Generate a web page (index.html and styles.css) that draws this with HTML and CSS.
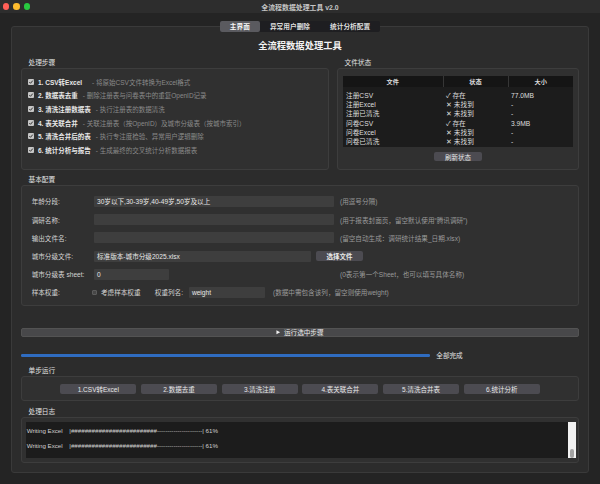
FILE: index.html
```html
<!DOCTYPE html>
<html lang="zh-CN">

<head>
    <meta charset="UTF-8">
    <title>全流程数据处理工具 v2.0</title>
    <link rel="stylesheet" href="styles.css">
</head>

<body>
    <div class="titlebar">
        <div class="lights">
            <span class="light red"></span>
            <span class="light yellow"></span>
            <span class="light green"></span>
        </div>
        <div class="title">全流程数据处理工具 v2.0</div>
        <div></div>
    </div>

    <div class="window-body">
        <div class="tabs">
            <div class="tabbar">
                <div class="tab active">主界面</div>
                <div class="tab">异常用户删除</div>
                <div class="tab">统计分析配置</div>
            </div>
        </div>

        <div class="panel">
            <div class="heading">全流程数据处理工具</div>

            <div class="top-row">
                <div class="steps-col">
                    <div class="section-label">处理步骤</div>
                    <div class="group steps">
                        <div class="step">
                            <svg class="check" viewBox="0 0 6 6"><rect width="6" height="6" rx="1" fill="#c6c6c6"/><path d="M1.3 3.1 L2.5 4.3 L4.8 1.6" fill="none" stroke="#262626" stroke-width="0.9"/></svg>
                            <span class="step-name">1. CSV转Excel</span>
                            <span class="step-desc far">- 将原始CSV文件转换为Excel格式</span>
                        </div>
                        <div class="step">
                            <svg class="check" viewBox="0 0 6 6"><rect width="6" height="6" rx="1" fill="#c6c6c6"/><path d="M1.3 3.1 L2.5 4.3 L4.8 1.6" fill="none" stroke="#262626" stroke-width="0.9"/></svg>
                            <span class="step-name">2. 数据表去重</span>
                            <span class="step-desc">- 删除注册表与问卷表中的重复OpenID记录</span>
                        </div>
                        <div class="step">
                            <svg class="check" viewBox="0 0 6 6"><rect width="6" height="6" rx="1" fill="#c6c6c6"/><path d="M1.3 3.1 L2.5 4.3 L4.8 1.6" fill="none" stroke="#262626" stroke-width="0.9"/></svg>
                            <span class="step-name">3. 清洗注册数据表</span>
                            <span class="step-desc">- 执行注册表的数据清洗</span>
                        </div>
                        <div class="step">
                            <svg class="check" viewBox="0 0 6 6"><rect width="6" height="6" rx="1" fill="#c6c6c6"/><path d="M1.3 3.1 L2.5 4.3 L4.8 1.6" fill="none" stroke="#262626" stroke-width="0.9"/></svg>
                            <span class="step-name">4. 表关联合并</span>
                            <span class="step-desc">- 关联注册表（按OpenID）及城市分级表（按城市索引）</span>
                        </div>
                        <div class="step">
                            <svg class="check" viewBox="0 0 6 6"><rect width="6" height="6" rx="1" fill="#c6c6c6"/><path d="M1.3 3.1 L2.5 4.3 L4.8 1.6" fill="none" stroke="#262626" stroke-width="0.9"/></svg>
                            <span class="step-name">5. 清洗合并后的表</span>
                            <span class="step-desc">- 执行专注度检验、异常用户逻辑删除</span>
                        </div>
                        <div class="step">
                            <svg class="check" viewBox="0 0 6 6"><rect width="6" height="6" rx="1" fill="#c6c6c6"/><path d="M1.3 3.1 L2.5 4.3 L4.8 1.6" fill="none" stroke="#262626" stroke-width="0.9"/></svg>
                            <span class="step-name">6. 统计分析与报告</span>
                            <span class="step-desc">- 生成最终的交叉统计分析数据报表</span>
                        </div>
                    </div>
                </div>

                <div class="files-col">
                    <div class="section-label">文件状态</div>
                    <div class="group files">
                        <table class="file-table">
                            <thead>
                                <tr><th class="c1">文件</th><th class="c2">状态</th><th class="c3">大小</th></tr>
                            </thead>
                            <tbody>
                                <tr class="spacer"><td></td><td></td><td></td></tr>
                                <tr><td>注册CSV</td><td>✓ 存在</td><td>77.0MB</td></tr>
                                <tr><td>注册Excel</td><td>✕ 未找到</td><td>-</td></tr>
                                <tr><td>注册已清洗</td><td>✕ 未找到</td><td>-</td></tr>
                                <tr><td>问卷CSV</td><td>✓ 存在</td><td>3.9MB</td></tr>
                                <tr><td>问卷Excel</td><td>✕ 未找到</td><td>-</td></tr>
                                <tr><td>问卷已清洗</td><td>✕ 未找到</td><td>-</td></tr>
                            </tbody>
                        </table>
                        <button class="btn refresh">刷新状态</button>
                    </div>
                </div>
            </div>

            <div class="section-label config-label">基本配置</div>
            <div class="group config">
                <div class="form">
                    <div class="flabel">年龄分段:</div>
                    <div class="field"><div class="input long">30岁以下,30-39岁,40-49岁,50岁及以上</div></div>
                    <div class="hint">(用逗号分隔)</div>

                    <div class="flabel">调研名称:</div>
                    <div class="field"><div class="input long"></div></div>
                    <div class="hint">(用于报表封面页，留空默认使用“腾讯调研”)</div>

                    <div class="flabel">输出文件名:</div>
                    <div class="field"><div class="input long"></div></div>
                    <div class="hint">(留空自动生成：调研统计结果_日期.xlsx)</div>

                    <div class="flabel">城市分级文件:</div>
                    <div class="field wide">
                        <div class="input file">标准版本-城市分级2025.xlsx</div>
                        <button class="btn choose">选择文件</button>
                    </div>

                    <div class="flabel">城市分级表 sheet:</div>
                    <div class="field"><div class="input sheet">0</div></div>
                    <div class="hint">(0表示第一个Sheet，也可以填写具体名称)</div>

                    <div class="flabel">样本权重:</div>
                    <div class="field wide">
                        <span class="box"></span>
                        <span class="box-text">考虑样本权重</span>
                        <span class="weight-label">权重列名:</span>
                        <div class="input weight">weight</div>
                        <span class="hint weight-hint">(数据中需包含该列，留空则使用weight)</span>
                    </div>
                </div>
            </div>

            <button class="run">
                <svg class="play" viewBox="0 0 5 5"><path d="M0.5 0.3 L4.6 2.5 L0.5 4.7 Z" fill="#f0f0f0"/></svg>
                运行选中步骤
            </button>

            <div class="progress-row">
                <div class="bar"></div>
                <span class="done">全部完成</span>
            </div>

            <div class="section-label single-label">单步运行</div>
            <div class="group stepbtns">
                <button class="btn sbtn">1.CSV转Excel</button>
                <button class="btn sbtn">2.数据去重</button>
                <button class="btn sbtn">3.清洗注册</button>
                <button class="btn sbtn">4.表关联合并</button>
                <button class="btn sbtn">5.清洗合并表</button>
                <button class="btn sbtn">6.统计分析</button>
            </div>

            <div class="section-label log-label">处理日志</div>
            <div class="group log">
                <div class="log-text">
                    <div class="log-line"><span class="log-name">Writing Excel</span>|#########################----------------------| 61%</div>
                    <div class="log-line"><span class="log-name">Writing Excel</span>|#########################----------------------| 61%</div>
                </div>
                <div class="scroll"><div class="thumb"></div></div>
            </div>
        </div>
    </div>
</body>

</html>
```

FILE: styles.css
```css
* {
    margin: 0;
    padding: 0;
    box-sizing: border-box;
}

body {
    width: 600px;
    height: 484px;
    overflow: hidden;
    background: #242424;
    font-family: "Liberation Sans", "Noto Sans CJK SC", sans-serif;
    font-size: 6.5px;
    color: #d8d8d8;
}

.titlebar {
    height: 13.3px;
    background: #2d2d2d;
    display: grid;
    grid-template-columns: 1fr auto 1fr;
    align-items: center;
}

.lights {
    display: flex;
    gap: 4px;
    padding-left: 2.7px;
}

.light {
    width: 6.6px;
    height: 6.6px;
    border-radius: 50%;
}

.red {
    background: #ff5f57;
}

.yellow {
    background: #febc2e;
}

.green {
    background: #28c840;
}

.title {
    font-size: 6.9px;
    font-weight: bold;
    color: #c4c4c4;
}

.window-body {
    padding: 0 11px;
}

.tabs {
    display: flex;
    justify-content: center;
    margin-top: 7.4px;
    position: relative;
    z-index: 1;
}

.tabbar {
    display: flex;
    height: 11px;
    background: #1e1e21;
    border-radius: 2px;
}

.tab {
    padding: 0 10px;
    line-height: 11px;
    font-size: 6.7px;
    font-weight: bold;
    color: #dedede;
    border-radius: 2px;
}

.tab.active {
    background: #5a5a5f;
    color: #f4f4f4;
}

.panel {
    margin-top: -5.7px;
    height: 447px;
    border: 1px solid #3a3a3a;
    border-radius: 3px;
    background: #2c2c2c;
    padding: 12px 9px 0;
}

.heading {
    text-align: center;
    font-size: 9.3px;
    font-weight: bold;
    line-height: 14px;
    color: #f2f2f2;
}

.top-row {
    display: flex;
    gap: 8px;
    margin-top: 4.5px;
}

.steps-col {
    width: 308px;
}

.files-col {
    flex: 1;
}

.section-label {
    line-height: 9px;
    padding-left: 7.5px;
    font-size: 6.7px;
    color: #e2e2e2;
    margin-bottom: 1.5px;
}

.group {
    border: 1px solid #3d3d3d;
    border-radius: 3px;
    background: #303030;
}

/* steps */
.steps {
    height: 102px;
    padding: 6px 6px 0;
}

.step {
    height: 13.6px;
    display: flex;
    align-items: center;
    white-space: nowrap;
}

.check {
    width: 6px;
    height: 6px;
    margin-right: 4px;
    flex: none;
}

.step-name {
    font-weight: bold;
    color: #e8e8e8;
}

.step-desc {
    margin-left: 5px;
    color: #8a8a8a;
}

.step-desc.far {
    margin-left: 10px;
}

/* file status */
.files {
    height: 102px;
    padding: 7px 5px 0;
}

.file-table {
    width: 230px;
    border-collapse: collapse;
    background: #1c1c1c;
    table-layout: fixed;
    font-size: 6.7px;
}

.file-table th {
    height: 11px;
    background: #151515;
    font-size: 6.2px;
    font-weight: bold;
    color: #dcdcdc;
    text-align: center;
}

.file-table th + th {
    border-left: 1px solid #363636;
}

.c1 {
    width: 100px;
}

.c2,
.c3 {
    width: 65px;
}

.file-table td {
    height: 9.3px;
    line-height: 9.3px;
    padding-left: 3px;
    color: #dedede;
    white-space: nowrap;
}

.file-table .spacer td {
    height: 3.8px;
    line-height: 3.8px;
}

.btn {
    border: none;
    border-radius: 2px;
    background: #4c4b51;
    color: #e8e8e8;
    font-family: inherit;
    font-size: 6.5px;
    text-align: center;
}

.refresh {
    display: block;
    width: 48px;
    height: 9.3px;
    margin: 5.4px auto 0;
}

/* config */
.config-label {
    margin-top: 5.2px;
    margin-bottom: 1.3px;
}

.config {
    height: 120.5px;
    padding: 9.5px 0 0 9.7px;
}

.form {
    display: grid;
    grid-template-columns: 62.3px 246px auto;
    grid-auto-rows: 11px;
    row-gap: 7.2px;
    align-items: center;
    font-size: 6.6px;
}

.flabel {
    color: #d4d4d4;
    white-space: nowrap;
}

.field {
    display: flex;
    align-items: center;
    height: 11px;
}

.field.wide {
    grid-column: 2 / 4;
}

.input {
    height: 11px;
    line-height: 11px;
    padding-left: 3px;
    background: #3e3e3e;
    border-radius: 1px;
    color: #e8e8e8;
    white-space: nowrap;
}

.long {
    width: 240.3px;
}

.file {
    width: 216.7px;
}

.sheet {
    width: 75.3px;
}

.weight {
    width: 76px;
}

.choose {
    width: 47.6px;
    height: 9.7px;
    margin-left: 5px;
    font-weight: bold;
}

.hint {
    color: #9a9a9a;
    white-space: nowrap;
}

.box {
    width: 5.6px;
    height: 5.6px;
    margin-left: -2.3px;
    background: #474747;
    border: 1px solid #5c5c5c;
    border-radius: 1px;
}

.box-text {
    margin-left: 3.7px;
    color: #d4d4d4;
}

.weight-label {
    margin-left: 14.3px;
    margin-right: 5.9px;
    color: #d4d4d4;
}

.weight-hint {
    margin-left: 8px;
}

/* run */
.run {
    display: flex;
    align-items: center;
    justify-content: center;
    gap: 3px;
    width: 100%;
    height: 9.6px;
    margin-top: 21.7px;
    background: #48484a;
    border: 1px solid #535353;
    border-radius: 2px;
    color: #ececec;
    font-family: inherit;
    font-size: 6.6px;
}

.play {
    width: 4.5px;
    height: 4.5px;
}

.progress-row {
    display: flex;
    align-items: center;
    height: 9px;
    margin-top: 13.7px;
}

.bar {
    width: 408.8px;
    height: 2.6px;
    border-radius: 1.3px;
    background: #2f6cc0;
}

.done {
    margin-left: 6.5px;
    color: #e4e4e4;
    font-size: 6.6px;
}

/* single steps */
.single-label {
    margin-top: 6.2px;
    margin-bottom: 1.1px;
}

.stepbtns {
    height: 25px;
    display: flex;
    justify-content: center;
    gap: 4.7px;
    padding-top: 7px;
}

.sbtn {
    width: 76px;
    height: 9.7px;
}

/* log */
.log-label {
    margin-top: 5.5px;
}

.log {
    height: 45.4px;
    display: flex;
    padding: 3.4px 2px 3.4px 4px;
}

.log-text {
    flex: 1;
    background: #1c1c1c;
    padding: 2.85px 0 0 0.7px;
    font-size: 6.2px;
    line-height: 14.3px;
    color: #d0d0d0;
    overflow: hidden;
}

.log-line {
    height: 14.3px;
    white-space: pre;
}

.log-name {
    display: inline-block;
    width: 42.6px;
}

.scroll {
    width: 8.3px;
    background: #f2f2f2;
    display: flex;
    align-items: flex-end;
    justify-content: center;
    padding-bottom: 0.6px;
}

.thumb {
    width: 4px;
    height: 9px;
    border-radius: 2px;
    background: #a3a3a3;
}
```
